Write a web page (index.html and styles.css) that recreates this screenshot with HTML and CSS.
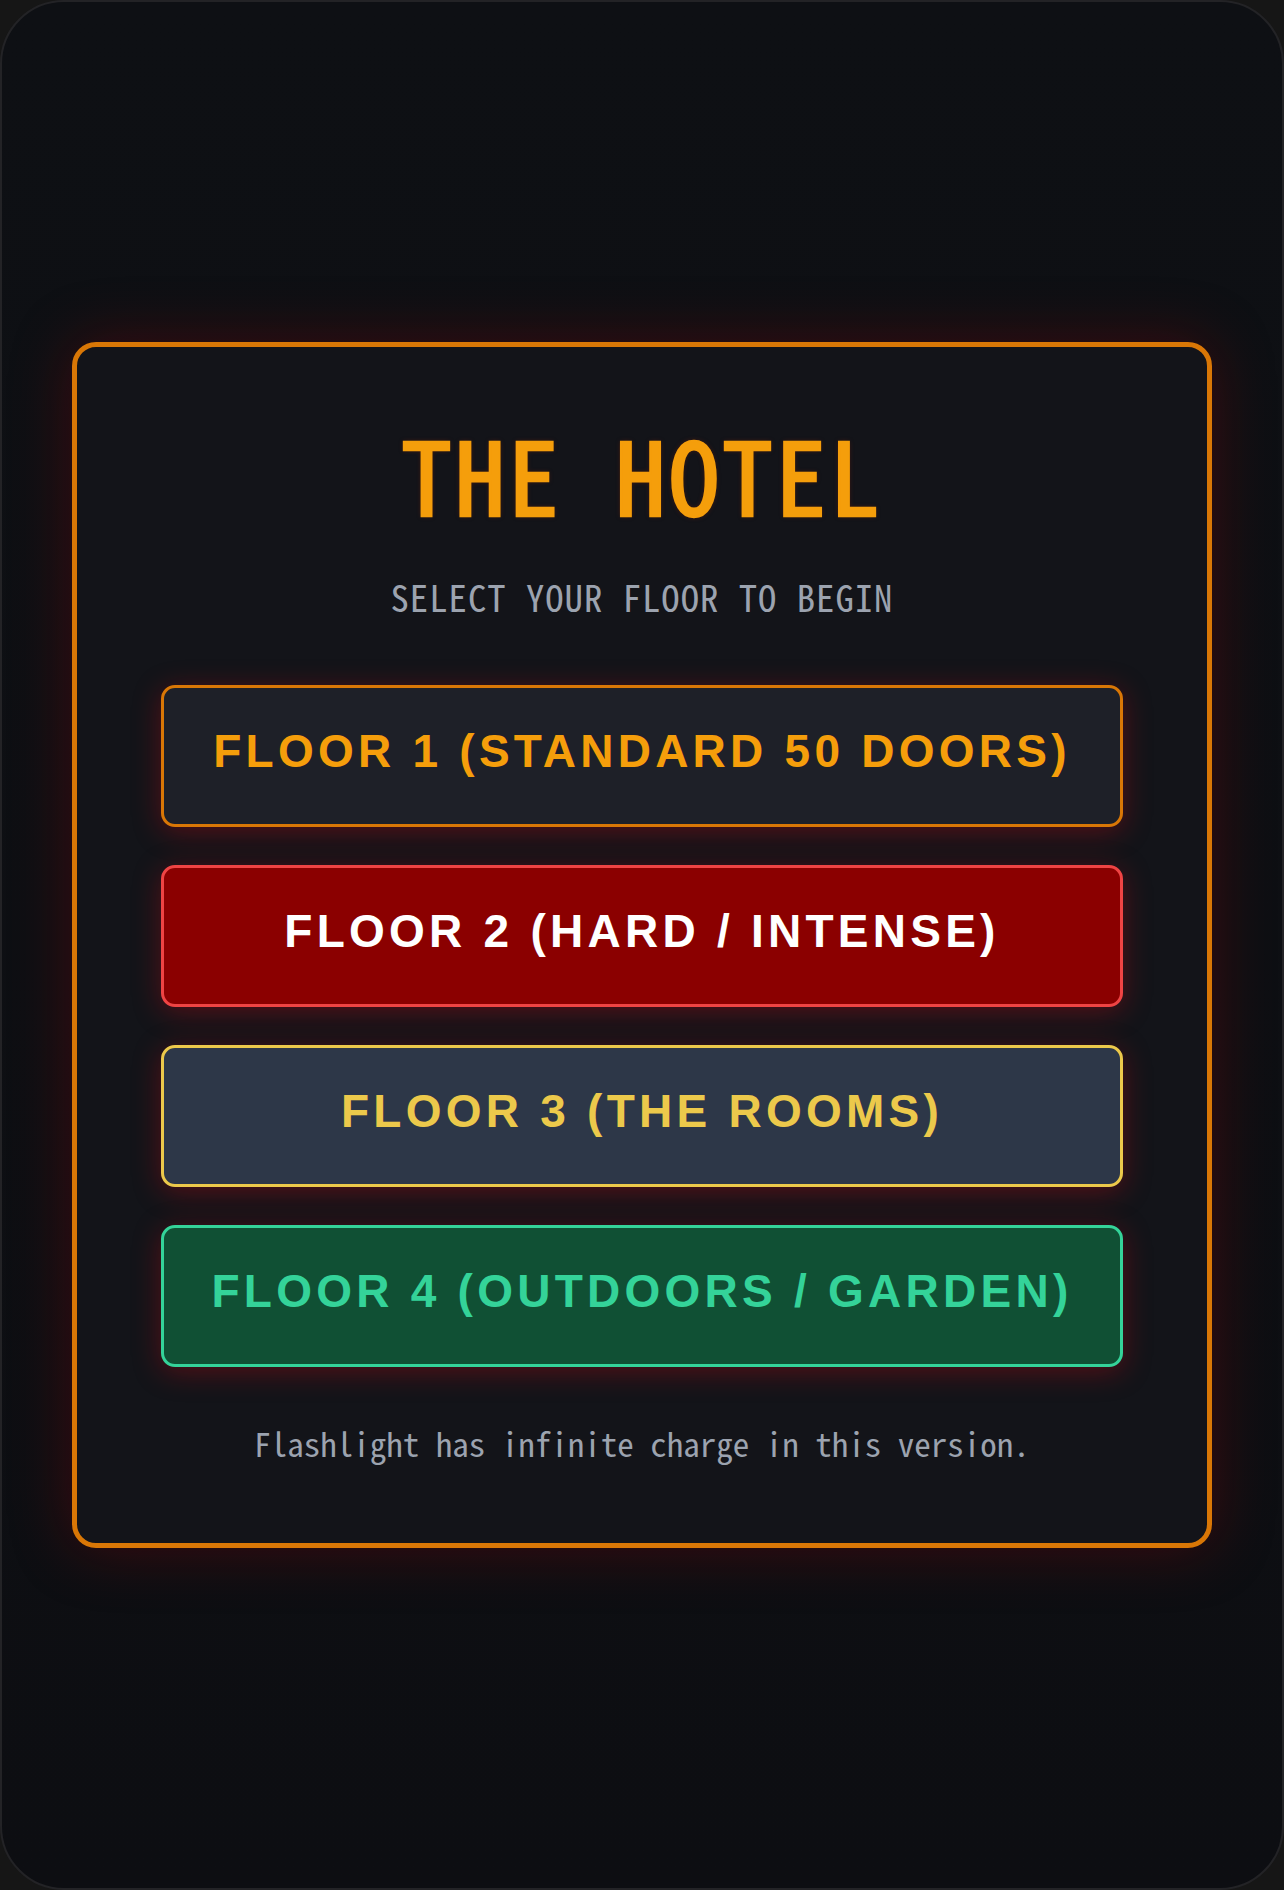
FILE: index.html
```html
<!DOCTYPE html>
<html lang="en">
<head>
<meta charset="utf-8">
<title>The Hotel</title>
<link rel="stylesheet" href="styles.css">
</head>
<body>
<div class="screen">
  <main class="card">
    <h1 class="title">THE HOTEL</h1>
    <p class="subtitle">SELECT YOUR FLOOR TO BEGIN</p>
    <div class="floors">
      <button class="floor floor-1">FLOOR 1 (STANDARD 50 DOORS)</button>
      <button class="floor floor-2">FLOOR 2 (HARD / INTENSE)</button>
      <button class="floor floor-3">FLOOR 3 (THE ROOMS)</button>
      <button class="floor floor-4">FLOOR 4 (OUTDOORS / GARDEN)</button>
    </div>
    <p class="note">Flashlight has infinite charge in this version.</p>
  </main>
</div>
</body>
</html>
```

FILE: styles.css
```css
html, body {
  margin: 0;
  padding: 0;
  background: #161616;
}

.screen {
  box-sizing: border-box;
  width: 1284px;
  height: 1890px;
  border: 2px solid #232326;
  border-radius: 64px;
  background: linear-gradient(180deg, #0e1014 0%, #0d0e12 100%);
  display: flex;
  align-items: center;
  justify-content: center;
  font-family: "Noto Sans Mono CJK SC", "DejaVu Sans Mono", monospace;
}

.card {
  box-sizing: border-box;
  width: 1140px;
  border: 5px solid #d97706;
  border-radius: 24px;
  background: #131419;
  padding: 52px 84px 76px;
  text-align: center;
  box-shadow: 0 0 60px rgba(150, 0, 10, 0.35);
}

.title {
  margin: 0;
  font-size: 101px;
  line-height: 146px;
  font-weight: 400;
  letter-spacing: 3px;
  color: #f59e0b;
  -webkit-text-stroke: 2.5px #f59e0b;
  text-shadow: 0 0 5px rgba(160, 40, 0, 0.5);
}

.subtitle {
  margin: 25px 0 62px;
  font-size: 36.7px;
  line-height: 53px;
  letter-spacing: 1px;
  color: #9ca3af;
}

.floors {
  display: flex;
  flex-direction: column;
  gap: 38px;
}

.floor {
  box-sizing: border-box;
  width: 100%;
  margin: 0;
  padding: 37px 20px 46px;
  border: 3px solid;
  border-radius: 14px;
  font-family: "Liberation Sans", Arial, sans-serif;
  font-weight: 700;
  font-size: 46px;
  line-height: 53px;
  letter-spacing: 4.25px;
  box-shadow: 0 5px 28px rgba(210, 10, 20, 0.34);
  cursor: pointer;
}

.floor-1 {
  background: #1e2028;
  border-color: #d97706;
  color: #f59e0b;
}

.floor-2 {
  background: #8b0000;
  border-color: #ef4444;
  color: #ffffff;
}

.floor-3 {
  background: #2d3748;
  border-color: #ecc94b;
  color: #ecc94b;
}

.floor-4 {
  background: #105034;
  border-color: #34d399;
  color: #34d399;
}

.note {
  margin: 52px 0 0;
  font-size: 33px;
  line-height: 48px;
  color: #9ca3af;
}
```
